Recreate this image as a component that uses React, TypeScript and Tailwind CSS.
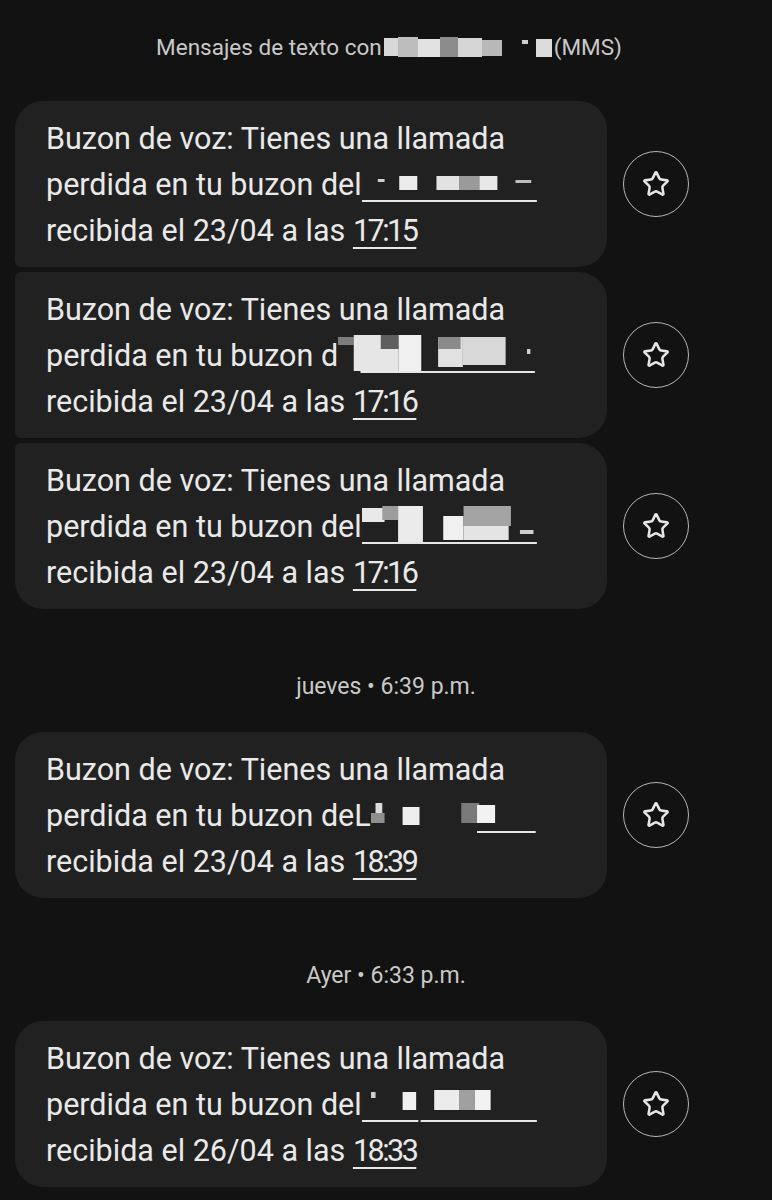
import React from 'react';
import { Star } from 'lucide-react';

type Blob = { x: number; y: number; w: number; h: number; c: string };

type Msg = {
  prefix: string;
  blobs: Blob[];
  under: [number, number][];
  date: string;
  time: string;
  shape: string;
};

// redacted phone number, drawn as a blurred patch over line 2
// blobs are drawn on a base grid and stretched to the width the text leaves free
const Redact: React.FC<{ blobs: Blob[]; under: [number, number][]; width: number; base: number }> = ({ blobs, under, width, base }) => (
  <svg width={width} height={46} viewBox={`0 0 ${base} 46`} preserveAspectRatio="none" className="inline-block align-top">
    {blobs.map((b, i) => (
      <rect key={i} x={b.x} y={b.y} width={b.w} height={b.h} fill={b.c} />
    ))}
    {under.map(([a, z], i) => (
      <rect key={'u' + i} x={a} y={38} width={z - a} height={2} fill="#e6e6e6" />
    ))}
  </svg>
);

const messages: Msg[] = [
  {
    prefix: 'del',
    blobs: [
      { x: 14, y: 17, w: 6, h: 3, c: '#cfcfcf' },
      { x: 33, y: 14, w: 16, h: 14, c: '#ececec' },
      { x: 66, y: 14, w: 20, h: 14, c: '#e2e2e2' },
      { x: 86, y: 14, w: 18, h: 14, c: '#9a9a9a' },
      { x: 104, y: 14, w: 16, h: 14, c: '#e8e8e8' },
      { x: 136, y: 18, w: 14, h: 3, c: '#bdbdbd' },
    ],
    under: [[0, 155]],
    date: '23/04',
    time: '17:15',
    shape: 'rounded-[28px] rounded-bl-[6px]',
  },
  {
    prefix: 'd',
    blobs: [
      { x: 0, y: 4, w: 14, h: 8, c: '#7d7d7d' },
      { x: 14, y: 2, w: 40, h: 36, c: '#e6e6e6' },
      { x: 38, y: 2, w: 22, h: 14, c: '#5f5f5f' },
      { x: 54, y: 2, w: 20, h: 36, c: '#f0f0f0' },
      { x: 89, y: 4, w: 22, h: 30, c: '#e2e2e2' },
      { x: 89, y: 4, w: 20, h: 12, c: '#8a8a8a' },
      { x: 111, y: 4, w: 38, h: 28, c: '#d9d9d9' },
      { x: 168, y: 16, w: 3, h: 5, c: '#cfcfcf' },
    ],
    under: [[20, 175]],
    date: '23/04',
    time: '17:16',
    shape: 'rounded-[28px] rounded-l-[6px]',
  },
  {
    prefix: 'del',
    blobs: [
      { x: 0, y: 4, w: 20, h: 14, c: '#e9e9e9' },
      { x: 18, y: 2, w: 14, h: 14, c: '#9d9d9d' },
      { x: 32, y: 2, w: 22, h: 36, c: '#ebebeb' },
      { x: 72, y: 12, w: 18, h: 24, c: '#f0f0f0' },
      { x: 90, y: 2, w: 42, h: 20, c: '#a4a4a4' },
      { x: 90, y: 22, w: 40, h: 14, c: '#e4e4e4' },
      { x: 140, y: 26, w: 12, h: 4, c: '#cfcfcf' },
    ],
    under: [[0, 155]],
    date: '23/04',
    time: '17:16',
    shape: 'rounded-[28px] rounded-tl-[6px]',
  },
];

const single = [
  {
    sep: 'jueves • 6:39 p.m.',
    prefix: 'deL',
    blobs: [
      { x: 0, y: 20, w: 12, h: 10, c: '#8f8f8f' },
      { x: 4, y: 10, w: 6, h: 10, c: '#dcdcdc' },
      { x: 28, y: 14, w: 15, h: 18, c: '#eeeeee' },
      { x: 80, y: 10, w: 16, h: 20, c: '#7a7a7a' },
      { x: 94, y: 12, w: 16, h: 18, c: '#f2f2f2' },
    ],
    under: [[94, 146]] as [number, number][],
    date: '23/04',
    time: '18:39',
  },
  {
    sep: 'Ayer • 6:33 p.m.',
    prefix: 'del',
    blobs: [
      { x: 8, y: 10, w: 4, h: 6, c: '#cfcfcf' },
      { x: 36, y: 10, w: 12, h: 18, c: '#f0f0f0' },
      { x: 64, y: 8, w: 22, h: 20, c: '#ececec' },
      { x: 86, y: 8, w: 14, h: 20, c: '#a0a0a0' },
      { x: 100, y: 8, w: 14, h: 20, c: '#f2f2f2' },
    ],
    under: [[0, 50], [52, 155]] as [number, number][],
    date: '26/04',
    time: '18:33',
  },
];

const Bubble: React.FC<{ prefix: string; blobs: Blob[]; under: [number, number][]; date: string; time: string; shape: string }> = ({
  prefix,
  blobs,
  under,
  date,
  time,
  shape,
}) => (
  <div className="flex items-center gap-4 pl-[15px]">
    <div className={`w-[592px] bg-[#212121] pl-[31px] pt-[15px] pb-[13px] text-[30.5px] leading-[46px] text-[#e9e9e9] ${shape}`}>
      <div className="whitespace-nowrap">Buzon de voz: Tienes una llamada</div>
      <div className="whitespace-nowrap">
        perdida en tu buzon {prefix}
        <Redact
          blobs={blobs}
          under={under}
          width={prefix === 'd' ? 198 : 176}
          base={prefix === 'd' ? 176 : 156}
        />
      </div>
      <div className="whitespace-nowrap">
        recibida el {date} a las{' '}
        <span className="tracking-[-2.5px] underline decoration-2 underline-offset-[6px]">{time}</span>
      </div>
    </div>
    <div className="flex h-[66px] w-[66px] items-center justify-center rounded-full border-[1.5px] border-[#b5b5b5]">
      <Star size={28} strokeWidth={2.2} color="#e6e6e6" />
    </div>
  </div>
);

export default function App() {
  return (
    <div className="min-h-[1200px] w-[772px] bg-[#121212] pb-10 font-['Roboto',sans-serif]">
      <div className="flex justify-center pt-[31px] text-[22.5px] leading-[32px] text-[#c9c9c9]">
        <span className="whitespace-nowrap pl-[6px]">
          Mensajes de texto con
          <svg width={172} height={32} viewBox="0 0 172 32" className="inline-block align-top">
            <rect x={2} y={7} width={14} height={18} fill="#d8d8d8" />
            <rect x={16} y={6} width={20} height={20} fill="#bdbdbd" />
            <rect x={36} y={8} width={22} height={18} fill="#e2e2e2" />
            <rect x={58} y={6} width={18} height={20} fill="#8c8c8c" />
            <rect x={76} y={7} width={24} height={19} fill="#d6d6d6" />
            <rect x={100} y={9} width={20} height={16} fill="#b8b8b8" />
            <rect x={140} y={9} width={6} height={4} fill="#cfcfcf" />
            <rect x={154} y={8} width={16} height={18} fill="#dcdcdc" />
          </svg>
          (MMS)
        </span>
      </div>

      <div className="mt-[38px] flex flex-col gap-[5px]">
        {messages.map((m, i) => (
          <Bubble key={i} {...m} />
        ))}
      </div>

      {single.map((m, i) => (
        <div key={i}>
          <div className="mt-[62px] flex justify-center text-[23px] leading-[32px] text-[#c9c9c9]">{m.sep}</div>
          <div className="mt-[29px]">
            <Bubble {...m} shape="rounded-[28px]" />
          </div>
        </div>
      ))}
    </div>
  );
}
